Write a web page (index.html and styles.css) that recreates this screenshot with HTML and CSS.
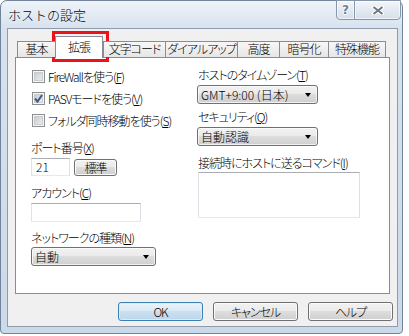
FILE: index.html
```html
<!DOCTYPE html>
<html lang="ja">
  <head>
    <meta charset="utf-8" />
    <link rel="stylesheet" href="styles.css">
  </head>
  <body>
    <div class="window">
      <!-- Barre de titre -->
      <div class="titlebar">
        <span class="title">ホストの設定</span>
        <div class="caption-buttons">
          <div class="cap-btn cap-help">?</div>
          <div class="cap-btn cap-close">
            <svg width="12" height="9" viewBox="0 0 12 9">
              <path d="M1.5 1 L10.5 8 M10.5 1 L1.5 8" stroke="#fff" stroke-width="4" stroke-linecap="square" />
              <path d="M1.5 1 L10.5 8 M10.5 1 L1.5 8" stroke="#6c7684" stroke-width="2" />
            </svg>
          </div>
        </div>
      </div>

      <div class="client">
        <!-- Onglets -->
        <div class="tabs">
          <div class="tab">基本</div>
          <div class="tab active">拡張</div>
          <div class="tab">文字コード</div>
          <div class="tab">ダイアルアップ</div>
          <div class="tab">高度</div>
          <div class="tab">暗号化</div>
          <div class="tab last">特殊機能</div>
        </div>

        <div class="panel">
          <div class="col col-left">
            <div class="check">
              <span class="box"></span>
              <span>FireWallを使う(<u>F</u>)</span>
            </div>
            <div class="check">
              <span class="box checked">
                <svg width="11" height="11" viewBox="0 0 11 11">
                  <path d="M2 5.5 L4.5 8.5 L9 2" fill="none" stroke="#3c5890" stroke-width="2" />
                </svg>
              </span>
              <span>PASVモードを使う(<u>V</u>)</span>
            </div>
            <div class="check">
              <span class="box"></span>
              <span>フォルダ同時移動を使う(<u>S</u>)</span>
            </div>

            <div class="label label-port">ポート番号(<u>X</u>)</div>
            <div class="port-row">
              <div class="input input-port">21</div>
              <button class="btn btn-small">標準</button>
            </div>

            <div class="label">アカウント(<u>C</u>)</div>
            <div class="input input-account"></div>

            <div class="label label-network">ネットワークの種類(<u>N</u>)</div>
            <div class="combo combo-wide">
              <span>自動</span>
              <span class="arrow"></span>
            </div>
          </div>

          <div class="col col-right">
            <div class="label">ホストのタイムゾーン(<u>T</u>)</div>
            <div class="combo">
              <span>GMT+9:00 (日本)</span>
              <span class="arrow"></span>
            </div>

            <div class="label label-security">セキュリティ(<u>Q</u>)</div>
            <div class="combo">
              <span>自動認識</span>
              <span class="arrow"></span>
            </div>

            <div class="label">接続時にホストに送るコマンド(<u>I</u>)</div>
            <div class="input input-command"></div>
          </div>
        </div>

        <!-- Boutons -->
        <div class="buttons">
          <button class="btn btn-default">OK</button>
          <button class="btn">キャンセル</button>
          <button class="btn">ヘルプ</button>
        </div>
      </div>

      <div class="highlight"></div>
    </div>
  </body>
</html>
```

FILE: styles.css
```css
body {
  margin: 0;
  background: #fff;
  font-family: "Noto Sans CJK JP", sans-serif;
  font-size: 12px;
  font-weight: 300;
  color: #000;
}

u {
  text-decoration-thickness: 1px;
  text-underline-offset: 1px;
}

.window {
  position: relative;
  width: 403px;
  height: 334px;
  box-sizing: border-box;
  border: 1px solid #70839a;
  border-radius: 7px 7px 4px 4px;
  background: linear-gradient(#eef3f9, #d7e2ee 28px, #cbd9e8);
  padding: 0 4px 6px 6px;
  display: flex;
  flex-direction: column;
}

.titlebar {
  height: 27px;
  display: flex;
  justify-content: space-between;
  align-items: flex-start;
}

.title {
  margin: 6px 0 0 1px;
  font-size: 13px;
  line-height: 16px;
}

.caption-buttons {
  display: flex;
  margin: -1px -3px 0 0;
}

.cap-btn {
  height: 20px;
  box-sizing: border-box;
  border: 1px solid #8797ab;
  background: linear-gradient(#f3f6fa, #e2e9f1 50%, #d6e0eb);
  box-shadow: inset 0 0 0 1px rgba(255, 255, 255, 0.6);
  display: flex;
  align-items: center;
  justify-content: center;
}

.cap-help {
  width: 19px;
  margin-right: -1px;
  border-radius: 0 0 0 4px;
  font-family: "DejaVu Sans", sans-serif;
  font-weight: bold;
  font-size: 12px;
  color: #737d8a;
  text-shadow: 1px 0 #fff, -1px 0 #fff, 0 1px #fff, 0 -1px #fff;
}

.cap-close {
  width: 47px;
  border-radius: 0 0 4px 0;
}

.client {
  flex: 1;
  background: #f0f0f0;
  border: 1px solid #8e9cae;
  padding-top: 7px;
  display: flex;
  flex-direction: column;
}

/* Onglets */
.tabs {
  display: grid;
  grid-template-columns: 38px 48px 62px 72px 42px 49px 58px;
  align-items: end;
  height: 21px;
  margin: 0 7px 0 9px;
  position: relative;
  z-index: 1;
  font-feature-settings: "palt";
  letter-spacing: -1px;
}

.tab {
  height: 16px;
  box-sizing: border-box;
  border: 1px solid #898c95;
  border-right: 0;
  border-bottom: 0;
  background: linear-gradient(#f7f7f7, #e6e6e6);
  text-align: center;
  line-height: 14px;
  white-space: nowrap;
}

.tab.last {
  border-right: 1px solid #898c95;
}

.tab.active {
  height: 22px;
  margin-bottom: -1px;
  background: #fff;
  border-right: 1px solid #898c95;
  line-height: 19px;
}

.panel {
  margin: 0 7px;
  height: 237px;
  box-sizing: border-box;
  border: 1px solid #898c95;
  background: #fff;
  padding-left: 15px;
  display: grid;
  grid-template-columns: 167px 1fr;
  font-feature-settings: "palt";
  letter-spacing: -1px;
}

.col {
  display: flex;
  flex-direction: column;
  align-items: flex-start;
}

.col-left {
  padding-top: 7px;
}

.col-right {
  padding-top: 10px;
}

.check {
  height: 22px;
  display: flex;
  align-items: center;
  gap: 3px;
  white-space: nowrap;
}

.box {
  width: 13px;
  height: 13px;
  margin-left: 1px;
  box-sizing: border-box;
  border: 1px solid #8e8f8f;
  background: linear-gradient(135deg, #bfc4cb, #f4f4f4);
  box-shadow: inset 0 0 0 1px #f6f6f6, inset 0 0 0 2px #c9ccd1;
  display: flex;
  align-items: center;
  justify-content: center;
}

.label {
  margin-top: 10px;
  line-height: 14px;
  white-space: nowrap;
}

.col-right .label:first-child {
  margin-top: 0;
}

.label-security {
  margin-top: 6px;
}

.label-network {
  margin-top: 9px;
}

.port-row {
  display: flex;
  gap: 4px;
  align-items: center;
  margin-top: 3px;
}

.input {
  box-sizing: border-box;
  background: #fff;
  border: 1px solid;
  border-color: #abadb3 #dbdfe6 #e3e9ef #e2e3ea;
  padding-left: 4px;
  line-height: 16px;
  letter-spacing: 0;
}

.input-port {
  width: 39px;
  height: 18px;
}

.input-account {
  width: 110px;
  height: 19px;
  margin-top: 3px;
}

.input-command {
  width: 162px;
  height: 46px;
  margin-top: 2px;
}

.combo {
  width: 121px;
  height: 19px;
  margin-top: 3px;
  margin-left: -1px;
  box-sizing: border-box;
  border: 1px solid #707070;
  border-radius: 3px;
  background: linear-gradient(#f2f2f2, #ebebeb 45%, #dddddd 50%, #cfcfcf);
  box-shadow: inset 0 0 0 1px rgba(255, 255, 255, 0.7);
  padding: 0 3px 0 3px;
  display: flex;
  align-items: center;
  justify-content: space-between;
  line-height: 16px;
  white-space: nowrap;
  letter-spacing: 0;
}

.combo-wide {
  width: 125px;
  margin-left: 0;
  margin-top: 2px;
}

.arrow {
  width: 0;
  height: 0;
  border-left: 3.5px solid transparent;
  border-right: 3.5px solid transparent;
  border-top: 4px solid #000;
  margin-right: 3px;
}

.btn {
  width: 85px;
  height: 19px;
  box-sizing: border-box;
  padding: 0;
  border: 1px solid #707070;
  border-radius: 3px;
  background: linear-gradient(#f2f2f2, #ebebeb 45%, #dddddd 50%, #cfcfcf);
  box-shadow: inset 0 0 0 1px #fbfbfb;
  font-family: inherit;
  font-size: 12px;
  font-weight: inherit;
  line-height: 16px;
  color: #000;
  font-feature-settings: "palt";
  letter-spacing: -1px;
}

.btn-small {
  width: 43px;
  height: 17px;
}

.btn-default {
  border-color: #3c7fb1;
  background: linear-gradient(#eaf4fb, #dbeaf5 45%, #cbe0f0 50%, #bcd6ec);
  box-shadow: inset 0 0 0 1px #d6ecf8;
}

.buttons {
  display: flex;
  justify-content: flex-end;
  gap: 10px;
  padding: 8px 4px 0 0;
}

/* Cadre rouge autour de l'onglet */
.highlight {
  position: absolute;
  left: 51px;
  top: 30px;
  width: 57px;
  height: 31px;
  box-sizing: border-box;
  border: 3px solid #e8131b;
}
```
